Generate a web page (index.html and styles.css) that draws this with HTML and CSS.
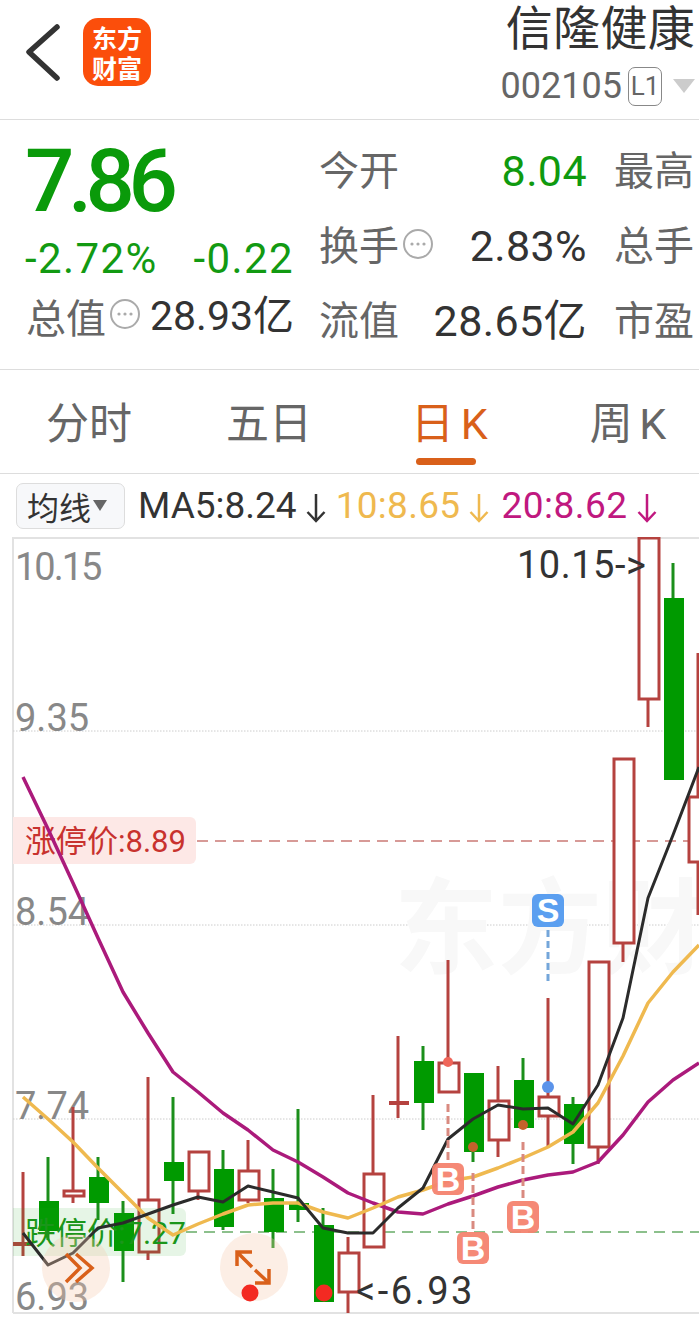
FILE: index.html
```html
<!DOCTYPE html>
<html lang="zh-CN">
<head>
    <meta charset="UTF-8">
    <meta name="viewport" content="width=device-width, initial-scale=1.0">
    <title>信隆健康 002105</title>
    <link rel="stylesheet" href="styles.css">
</head>
<body>
    <header class="top-bar">
        <svg class="back-icon" width="40" height="60" viewBox="0 0 40 60">
            <path d="M33 5 L5 30 L33 56" fill="none" stroke="#333" stroke-width="5.5" stroke-linecap="round" stroke-linejoin="round"/>
        </svg>
        <div class="logo"><span>东方</span><span>财富</span></div>
        <div class="stock-name">
            <div class="name">信隆健康</div>
            <div class="code-row">
                <span class="code">002105</span>
                <span class="level">L1</span>
                <span class="caret"></span>
            </div>
        </div>
    </header>

    <section class="quote">
        <div class="price-box">
            <div class="price">7.86</div>
            <div class="change"><span>-2.72%</span><span>-0.22</span></div>
            <div class="total">
                <span class="key">总值</span>
                <svg class="more" width="32" height="32" viewBox="0 0 32 32"><circle cx="16" cy="16" r="14" fill="none" stroke="#aaa" stroke-width="2"/><circle cx="10" cy="16" r="1.6" fill="#aaa"/><circle cx="16" cy="16" r="1.6" fill="#aaa"/><circle cx="22" cy="16" r="1.6" fill="#aaa"/></svg>
                <span class="val">28.93亿</span>
            </div>
        </div>
        <div class="stats">
            <div class="stat">
                <span class="key">今开</span>
                <span class="val green">8.04</span>
                <span class="key">最高</span>
            </div>
            <div class="stat">
                <span class="key">换手</span>
                <svg class="more" width="32" height="32" viewBox="0 0 32 32"><circle cx="16" cy="16" r="14" fill="none" stroke="#aaa" stroke-width="2"/><circle cx="10" cy="16" r="1.6" fill="#aaa"/><circle cx="16" cy="16" r="1.6" fill="#aaa"/><circle cx="22" cy="16" r="1.6" fill="#aaa"/></svg>
                <span class="val">2.83%</span>
                <span class="key">总手</span>
            </div>
            <div class="stat">
                <span class="key">流值</span>
                <span class="val">28.65亿</span>
                <span class="key">市盈</span>
            </div>
        </div>
    </section>

    <nav class="tabs">
        <a class="tab tab-1">分时</a>
        <a class="tab tab-2">五日</a>
        <a class="tab tab-3 active">日 K</a>
        <a class="tab tab-4">周 K</a>
    </nav>

    <div class="ma-bar">
        <div class="ma-select">均线<span class="ma-caret"></span></div>
        <span class="ma ma5">MA5:8.24<svg class="ma-arrow" width="20" height="30" viewBox="0 0 20 30"><path d="M10 1 V28 M1.5 19 L10 28 L18.5 19"/></svg></span>
        <span class="ma ma10">10:8.65<svg class="ma-arrow" width="20" height="30" viewBox="0 0 20 30"><path d="M10 1 V28 M1.5 19 L10 28 L18.5 19"/></svg></span>
        <span class="ma ma20">20:8.62<svg class="ma-arrow" width="20" height="30" viewBox="0 0 20 30"><path d="M10 1 V28 M1.5 19 L10 28 L18.5 19"/></svg></span>
    </div>

    <svg class="chart" width="699" height="785" viewBox="0 537 699 785">
        <!-- frame and grid -->
        <path class="frame" d="M13 1313 V538 H699 M13 1313 H699"/>
        <path class="grid" d="M13 731 H699 M13 925 H699 M13 1119 H699"/>
        <text class="watermark" x="394" y="966">东方财富</text>

        <path class="limit-up" d="M197 841 H699"/>
        <path class="limit-down" d="M186 1232 H699"/>

        <text class="axis axis-tight" x="15" y="580">10.15</text>
        <text class="axis" x="15" y="731">9.35</text>
        <text class="axis" x="15" y="925">8.54</text>
        <text class="axis" x="15" y="1119">7.74</text>
        <text class="axis" x="15" y="1310">6.93</text>

        <!-- falling days -->
        <path class="wick-down" d="M48 1157 V1240 M98 1157 V1220 M123 1201 V1282 M173 1097 V1214 M223 1150 V1230 M273 1169 V1248 M298 1109 V1222 M323 1208 V1225 M423 1046 V1130 M473 1073 V1162 M523 1058 V1128 M573 1097 V1164 M673 563 V598"/>
        <g class="body-down">
            <rect x="39" y="1201" width="20" height="30"/>
            <rect x="89" y="1177" width="20" height="26"/>
            <rect x="114" y="1213" width="20" height="38"/>
            <rect x="164" y="1162" width="20" height="19"/>
            <rect x="214" y="1169" width="20" height="58"/>
            <rect x="264" y="1198" width="20" height="34"/>
            <rect x="289" y="1203" width="20" height="7"/>
            <rect x="314" y="1225" width="20" height="77"/>
            <rect x="414" y="1061" width="20" height="42"/>
            <rect x="464" y="1073" width="20" height="79"/>
            <rect x="514" y="1080" width="20" height="48"/>
            <rect x="564" y="1104" width="20" height="40"/>
            <rect x="664" y="598" width="20" height="182"/>
        </g>

        <!-- rising days -->
        <path class="wick-up" d="M23 1172 V1256 M73 1107 V1203 M148 1077 V1260 M198 1191 V1200 M248 1140 V1203 M348 1237 V1313 M373 1095 V1173 M398 1036 V1118 M448 960 V1064 M498 1066 V1157 M548 998 V1146 M598 1147 V1164 M623 943 V962 M648 699 V727 M698 653 V915"/>
        <path class="cross-up" d="M13 1244 H33 M389 1103 H409"/>
        <g class="body-up">
            <rect x="64" y="1191" width="20" height="5"/>
            <rect x="139" y="1200" width="20" height="52"/>
            <rect x="189" y="1152" width="20" height="39"/>
            <rect x="239" y="1171" width="20" height="29"/>
            <rect x="339" y="1253" width="20" height="39"/>
            <rect x="364" y="1174" width="20" height="73"/>
            <rect x="439" y="1063" width="20" height="29"/>
            <rect x="489" y="1101" width="20" height="39"/>
            <rect x="539" y="1097" width="20" height="19"/>
            <rect x="589" y="962" width="20" height="185"/>
            <rect x="614" y="759" width="20" height="184"/>
            <rect x="639" y="538" width="20" height="161"/>
            <rect x="689" y="797" width="20" height="65"/>
        </g>

        <!-- limit price tags -->
        <path class="tag-up" d="M13 817 H190 a6 6 0 0 1 6 6 V858 a6 6 0 0 1 -6 6 H13 Z"/>
        <text class="tag-up-text" x="25" y="852">涨停价:8.89</text>
        <path class="tag-down" d="M13 1208 H180 a6 6 0 0 1 6 6 V1250 a6 6 0 0 1 -6 6 H13 Z"/>
        <text class="tag-down-text" x="25" y="1244">跌停价:7.27</text>

        <!-- moving averages -->
        <polyline class="line ma20-line" points="23,777 48,829 73,883 98,938 123,992 148,1033 173,1072 198,1092 223,1113 248,1130 273,1150 298,1162 323,1177 348,1193 373,1203 398,1212 423,1214 448,1204 473,1196 498,1187 523,1180 548,1175 573,1172 598,1162 623,1135 648,1102 673,1080 699,1063"/>
        <polyline class="line ma10-line" points="23,1097 48,1119 73,1142 98,1168 123,1193 148,1218 173,1235 198,1224 223,1214 248,1205 273,1203 298,1203 323,1212 348,1218 373,1208 398,1197 423,1190 448,1181 473,1177 498,1168 523,1158 548,1147 573,1132 598,1103 623,1056 648,1003 673,972 699,945"/>
        <polyline class="line ma5-line" points="23,1233 48,1265 73,1253 98,1228 123,1223 148,1214 173,1205 198,1197 223,1202 248,1186 273,1192 298,1198 323,1228 348,1233 373,1233 398,1208 423,1188 448,1139 473,1119 498,1105 523,1109 548,1108 573,1124 598,1085 623,1018 648,898 673,835 699,767"/>

        <!-- high / low notes -->
        <text class="note" x="517" y="578">10.15-&gt;</text>
        <text class="note note-low" x="356" y="1304">&lt;-6.93</text>

        <!-- trade marks -->
        <path class="dash-buy" d="M448 1104 V1162 M473 1173 V1232 M523 1142 V1200"/>
        <path class="dash-sell" d="M548 930 V985"/>
        <circle class="dot-buy" cx="448" cy="1062" r="5"/>
        <circle class="dot-buy-dark" cx="473" cy="1147" r="5"/>
        <circle class="dot-buy-dark" cx="523" cy="1125" r="5"/>
        <circle class="dot-sell" cx="548" cy="1087" r="6"/>
        <rect class="badge-buy" x="432" y="1163" width="32" height="32" rx="6"/>
        <text class="badge-text" x="448" y="1191">B</text>
        <rect class="badge-buy" x="457" y="1232" width="32" height="32" rx="6"/>
        <text class="badge-text" x="473" y="1260">B</text>
        <rect class="badge-buy" x="507" y="1201" width="32" height="32" rx="6"/>
        <text class="badge-text" x="523" y="1229">B</text>
        <rect class="badge-sell" x="532" y="894" width="32" height="33" rx="6"/>
        <text class="badge-text" x="548" y="922">S</text>

        <!-- floating buttons -->
        <circle class="fab" cx="76" cy="1268" r="34"/>
        <path class="fab-icon" d="M66 1254 L80 1268 L66 1282 M76 1254 L92 1268 L76 1282"/>
        <circle class="fab" cx="254" cy="1267" r="34"/>
        <path class="fab-icon" d="M237 1266 V1252 H252 M237 1252 L252 1267 M269 1269 V1283 H255 M269 1283 L255 1270"/>
        <circle class="dot-red" cx="250" cy="1293" r="8.5"/>
        <circle class="dot-red" cx="324" cy="1293" r="8.5"/>
    </svg>
</body>
</html>
```

FILE: styles.css
```css
html, body {
    margin: 0;
    padding: 0;
    background-color: #fff;
    overflow: hidden;
}

body {
    width: 699px;
    height: 1322px;
    font-family: Roboto, "Noto Sans CJK SC", sans-serif;
    color: #333;
}

.top-bar {
    height: 119px;
    display: flex;
    align-items: flex-start;
    border-bottom: 1px solid #ddd;
}

.back-icon {
    margin: 22px 0 0 24px;
    flex: none;
}

.logo {
    flex: none;
    width: 68px;
    height: 68px;
    margin: 18px 0 0 19px;
    border-radius: 15px;
    background-color: #fb4e0b;
    color: #fff;
    font-family: "Noto Sans CJK SC", sans-serif;
    font-size: 25px;
    font-weight: 700;
    line-height: 30px;
    display: flex;
    flex-direction: column;
    align-items: center;
    justify-content: center;
}

.stock-name {
    margin-left: auto;
    padding-right: 4px;
    display: flex;
    flex-direction: column;
    align-items: flex-end;
}

.name {
    font-family: "Noto Sans CJK SC", sans-serif;
    font-size: 47px;
    line-height: 50px;
    letter-spacing: 0.3px;
    color: #333;
}

.code-row {
    display: flex;
    align-items: center;
    height: 40px;
    margin-top: 16px;
}

.code {
    font-size: 36px;
    color: #666;
}

.level {
    box-sizing: border-box;
    width: 34px;
    height: 39px;
    margin-left: 6px;
    border: 1.5px solid #888;
    border-radius: 7px;
    font-size: 26px;
    line-height: 36px;
    text-align: center;
    color: #666;
}

.caret {
    width: 0;
    height: 0;
    margin-left: 11px;
    border-left: 11px solid transparent;
    border-right: 11px solid transparent;
    border-top: 14px solid #ccc;
}

.quote {
    box-sizing: border-box;
    height: 250px;
    display: flex;
    border-bottom: 1px solid #ddd;
    overflow: hidden;
}

.price-box {
    flex: none;
    width: 319px;
    padding-left: 25px;
    box-sizing: border-box;
}

.price {
    height: 121px;
    font-size: 87px;
    font-weight: 500;
    line-height: 122px;
    letter-spacing: -6.5px;
    color: #0a9a0a;
}

.change {
    width: 269px;
    display: flex;
    justify-content: space-between;
    height: 36px;
    font-size: 42px;
    line-height: 36px;
    letter-spacing: 1.4px;
    color: #129a12;
}

.total {
    display: flex;
    align-items: center;
    height: 78px;
    padding-left: 1px;
}

.stats {
    flex: 1;
    padding-top: 13px;
}

.stat {
    height: 75px;
    display: flex;
    align-items: center;
    white-space: nowrap;
}

.key {
    font-family: "Noto Sans CJK SC", sans-serif;
    font-size: 40px;
    line-height: 44px;
    margin-top: -5px;
    color: #666;
}

.val {
    font-size: 43px;
    line-height: 44px;
    color: #333;
}

.total .val {
    font-size: 41px;
    margin-left: 9px;
}

.total .key {
    margin-top: 0;
}

.green {
    color: #0f9a0f;
}

.more {
    flex: none;
    margin: -4px 0 0 3px;
}

.stat .val {
    margin-left: auto;
    margin-right: 27px;
    letter-spacing: 0.4px;
}

.stat > .key:last-child {
    width: 85px;
    flex: none;
}

.tabs {
    height: 104px;
    display: flex;
    align-items: flex-start;
    padding-left: 46px;
    border-bottom: 1px solid #ddd;
    box-sizing: border-box;
}

.tab {
    position: relative;
    font-size: 43px;
    line-height: 108px;
    word-spacing: -4px;
    color: #666;
    white-space: nowrap;
}

.tab-2 {
    margin-left: 94px;
}

.tab-3 {
    margin-left: 99px;
    color: #d9601a;
}

.tab-4 {
    margin-left: 102px;
}

.tab.active::after {
    content: "";
    position: absolute;
    left: 5px;
    width: 60px;
    top: 88px;
    height: 7px;
    border-radius: 4px;
    background-color: #d9601a;
}

.ma-bar {
    height: 63px;
    display: flex;
    align-items: center;
    padding-left: 16px;
    box-sizing: border-box;
    white-space: nowrap;
}

.ma-select {
    box-sizing: border-box;
    width: 109px;
    height: 46px;
    margin-right: 13px;
    padding-left: 10px;
    display: flex;
    align-items: center;
    border: 1px solid #ddd;
    border-radius: 7px;
    background-color: #f7f8fa;
    font-family: "Noto Sans CJK SC", sans-serif;
    font-size: 32px;
    color: #333;
}

.ma-caret {
    width: 0;
    height: 0;
    margin-left: 2px;
    border-left: 7px solid transparent;
    border-right: 7px solid transparent;
    border-top: 11px solid #666;
}

.ma {
    display: flex;
    align-items: center;
    font-size: 37px;
    margin-right: 10px;
}

.ma-arrow {
    margin: 4px 0 0 9px;
    fill: none;
    stroke: currentColor;
    stroke-width: 2.5;
}

.ma5 { color: #333; }
.ma10 { color: #efb94f; letter-spacing: 0.3px; margin-right: 12px; }
.ma20 { color: #c0187f; letter-spacing: 0.5px; }

.chart {
    display: block;
}

.chart text {
    font-family: Roboto, "Noto Sans CJK SC", sans-serif;
}

.frame {
    fill: none;
    stroke: #e2e2e2;
    stroke-width: 2;
}

.grid {
    fill: none;
    stroke: #ccc;
    stroke-width: 1;
    stroke-dasharray: 1.5 1.5;
}

.chart .watermark {
    font-family: "Noto Sans CJK SC", sans-serif;
    font-size: 104px;
    font-weight: 700;
    fill: #f8f8f8;
}

.limit-up {
    fill: none;
    stroke: #d79a97;
    stroke-width: 2;
    stroke-dasharray: 11 7;
}

.limit-down {
    fill: none;
    stroke: #8cc08c;
    stroke-width: 2;
    stroke-dasharray: 11 7;
}

.axis {
    font-size: 38px;
    fill: #888;
}

.axis-tight {
    letter-spacing: -2px;
}

.wick-down {
    fill: none;
    stroke: #1b8f1b;
    stroke-width: 3;
}

.body-down rect {
    fill: #009a00;
}

.wick-up,
.cross-up {
    fill: none;
    stroke: #b5423f;
    stroke-width: 3;
}

.cross-up {
    stroke-width: 4;
}

.body-up rect {
    fill: #fff;
    stroke: #b5423f;
    stroke-width: 3;
}

.tag-up {
    fill: #fde8e6;
}

.tag-up-text {
    font-size: 31px;
    fill: #c8322e;
}

.tag-down {
    fill: rgba(30, 160, 30, 0.11);
}

.tag-down-text {
    font-size: 31px;
    fill: #1a961a;
}

.line {
    fill: none;
    stroke-width: 3.5;
    stroke-linejoin: round;
}

.ma5-line { stroke: #2b2b2b; stroke-width: 3; }
.ma10-line { stroke: #efb94f; }
.ma20-line { stroke: #ab1a7b; }

.note {
    font-size: 38px;
    letter-spacing: 0.5px;
    fill: #333;
}

.note-low {
    letter-spacing: 2.5px;
}

.dash-buy {
    fill: none;
    stroke: #d98a80;
    stroke-width: 3;
    stroke-dasharray: 8 4;
}

.dash-sell {
    fill: none;
    stroke: #74a6da;
    stroke-width: 3;
    stroke-dasharray: 7 4;
}

.dot-buy { fill: #f0665a; }
.dot-buy-dark { fill: #c4622c; }
.dot-sell { fill: #5b93ea; }
.dot-red { fill: #f32a22; }

.badge-buy {
    fill: #f4836f;
    opacity: 0.95;
}

.badge-sell {
    fill: #5b9ff0;
}

.chart .badge-text {
    font-family: "Liberation Sans", sans-serif;
    font-size: 34px;
    font-weight: 700;
    fill: #fff;
    text-anchor: middle;
}

.fab {
    fill: #f7c9ae;
    opacity: 0.32;
}

.fab-icon {
    fill: none;
    stroke: #d9601a;
    stroke-width: 3.5;
}
```
